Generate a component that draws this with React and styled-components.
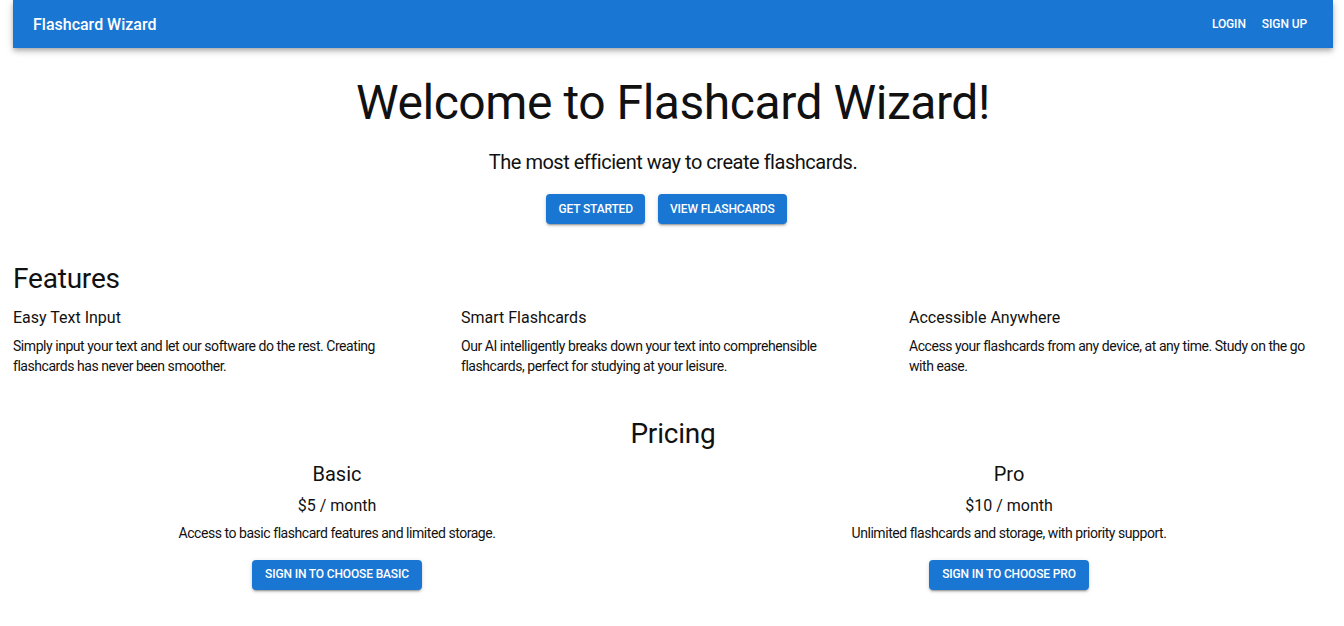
import React from "react"
import styled, { createGlobalStyle } from "styled-components"

const GlobalStyle = createGlobalStyle`
    html, body {
        margin: 0;
        padding: 0;
        background: #fff;
    }
    body {
        font-family: Roboto, "Helvetica Neue", Arial, sans-serif;
        color: #111;
        -webkit-font-smoothing: antialiased;
    }
    * {
        box-sizing: border-box;
    }
`;

const Page = styled.div`
    padding: 0 11px 40px 13px;
`;

const AppBar = styled.header`
    display: flex;
    align-items: center;
    height: 48px;
    padding: 0 18px 0 20px;
    background: #1976d2;
    color: #fff;
    box-shadow: 0px 2px 4px -1px rgba(0,0,0,0.2), 0px 4px 5px 0px rgba(0,0,0,0.14), 0px 1px 10px 0px rgba(0,0,0,0.12);
`;

const Brand = styled.div`
    flex: 1;
    font-size: 16px;
    font-weight: 500;
`;

const NavButton = styled.button`
    background: none;
    border: 0;
    color: #fff;
    font-family: inherit;
    font-size: 12px;
    font-weight: 500;
    letter-spacing: -0.1px;
    text-transform: uppercase;
    padding: 6px 8px;
    line-height: 1.75;
    cursor: pointer;
`;

const Hero = styled.section`
    display: flex;
    flex-direction: column;
    align-items: center;
    padding-top: 27px;
`;

const Title = styled.h1`
    margin: 0 0 15px;
    font-size: 48px;
    font-weight: 400;
    line-height: 1.167;
    letter-spacing: -0.45px;
`;

const Subtitle = styled.p`
    margin: 0 0 16px;
    font-size: 20px;
    font-weight: 400;
    line-height: 1.6;
    letter-spacing: -0.48px;
`;

const Button = styled.button`
    background: #1976d2;
    color: #fff;
    border: 0;
    border-radius: 4px;
    font-family: inherit;
    font-size: 12px;
    font-weight: 500;
    letter-spacing: -0.15px;
    text-transform: uppercase;
    line-height: 1.75;
    padding: 3px 13px;
    height: 30px;
    cursor: pointer;
    box-shadow: 0px 3px 1px -2px rgba(0,0,0,0.2), 0px 2px 2px 0px rgba(0,0,0,0.14), 0px 1px 5px 0px rgba(0,0,0,0.12);
`;

// each hero button carries its own right margin, so the pair sits a bit left of centre
const HeroButton = styled(Button)`
    margin-right: 13px;
    padding: 3px 12px;
`;

const SectionTitle = styled.h2`
    margin: ${props => props.$top} 0 0;
    font-size: 28px;
    font-weight: 400;
    line-height: 1.235;
    letter-spacing: -0.2px;
    text-align: ${props => props.$center ? "center" : "left"};
`;

const FeatureGrid = styled.div`
    display: grid;
    grid-template-columns: repeat(3, 1fr);
    column-gap: 24px;
    margin-top: 8px;
`;

const Feature = styled.div`
    padding-right: 14px;
`;

const FeatureTitle = styled.h3`
    margin: 0 0 6px;
    font-size: 16px;
    font-weight: 400;
    line-height: 1.6;
`;

const BodyText = styled.p`
    margin: 0;
    font-size: 14px;
    line-height: 1.43;
    letter-spacing: -0.45px;
`;

const PlanGrid = styled.div`
    display: grid;
    grid-template-columns: repeat(2, 1fr);
    column-gap: 24px;
    margin-top: 6px;
`;

const Plan = styled.div`
    display: flex;
    flex-direction: column;
    align-items: center;
    text-align: center;
`;

const PlanName = styled.h3`
    margin: 0 0 4px;
    font-size: 20px;
    font-weight: 400;
    line-height: 1.6;
`;

const Price = styled.p`
    margin: 0 0 5px;
    font-size: 16px;
    line-height: 1.5;
`;

const PlanText = styled(BodyText)`
    margin-bottom: 17px;
`;

const features = [
    {
        title: "Easy Text Input",
        text: "Simply input your text and let our software do the rest. Creating flashcards has never been smoother.",
    },
    {
        title: "Smart Flashcards",
        text: "Our AI intelligently breaks down your text into comprehensible flashcards, perfect for studying at your leisure.",
    },
    {
        title: "Accessible Anywhere",
        text: "Access your flashcards from any device, at any time. Study on the go with ease.",
    },
];

const plans = [
    { name: "Basic", price: "$5 / month", text: "Access to basic flashcard features and limited storage." },
    { name: "Pro", price: "$10 / month", text: "Unlimited flashcards and storage, with priority support." },
];

export default function App() {
    return (
        <>
            <GlobalStyle />
            <Page>
                <AppBar>
                    <Brand>Flashcard Wizard</Brand>
                    <NavButton>Login</NavButton>
                    <NavButton>Sign Up</NavButton>
                </AppBar>

                <Hero>
                    <Title>Welcome to Flashcard Wizard!</Title>
                    <Subtitle>The most efficient way to create flashcards.</Subtitle>
                    <div>
                        <HeroButton>Get Started</HeroButton>
                        <HeroButton>View Flashcards</HeroButton>
                    </div>
                </Hero>

                <SectionTitle $top="38px">Features</SectionTitle>
                <FeatureGrid>
                    {features.map((f) => (
                        <Feature key={f.title}>
                            <FeatureTitle>{f.title}</FeatureTitle>
                            <BodyText>{f.text}</BodyText>
                        </Feature>
                    ))}
                </FeatureGrid>

                <SectionTitle $top="41px" $center>Pricing</SectionTitle>
                <PlanGrid>
                    {plans.map((p) => (
                        <Plan key={p.name}>
                            <PlanName>{p.name}</PlanName>
                            <Price>{p.price}</Price>
                            <PlanText>{p.text}</PlanText>
                            <Button>Sign in to choose {p.name}</Button>
                        </Plan>
                    ))}
                </PlanGrid>
            </Page>
        </>
    );
}
